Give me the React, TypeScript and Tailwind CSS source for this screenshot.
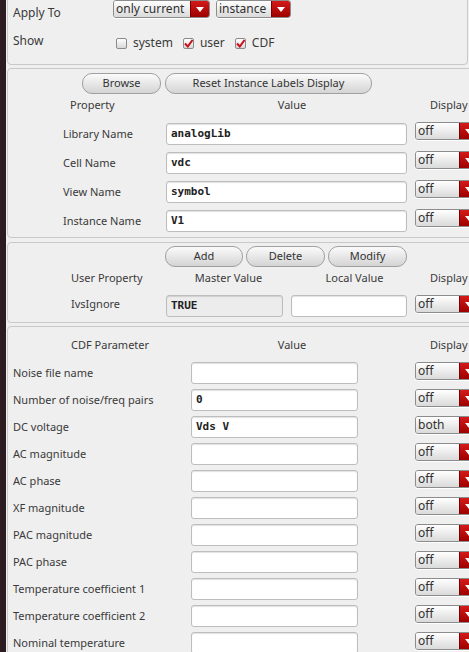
import clsx from 'clsx';
import type { ReactNode } from 'react';

// Small white down-arrow used on the red combo buttons.
function Caret() {
  return (
    <svg width="8" height="5" viewBox="0 0 8 5">
      <path d="M0 0h8L4 5z" fill="#fff" />
    </svg>
  );
}

function Combo({ value, className }: { value: string; className: string }) {
  return (
    <div
      className={clsx(
        'flex h-[18px] shrink-0 overflow-hidden rounded-[3px] border border-[#8c8c8c] shadow-[0_1px_0_rgba(255,255,255,0.9)]',
        className,
      )}
    >
      <div className="flex-1 bg-linear-to-b from-white to-[#dadada] pl-[2px] text-[12px] leading-[16px] text-[#303030]">
        {value}
      </div>
      <div className="flex w-[19px] items-center justify-center border-l border-[#7a0000] bg-linear-to-b from-[#d41a1a] to-[#9e0000]">
        <Caret />
      </div>
    </div>
  );
}

function Btn({ children, className }: { children: ReactNode; className: string }) {
  return (
    <div
      className={clsx(
        'flex h-[21px] shrink-0 items-center justify-center rounded-[10px] border border-[#a0a0a0] bg-linear-to-b from-[#fbfbfb] to-[#d4d4d4] text-[11px] text-[#333]',
        className,
      )}
    >
      {children}
    </div>
  );
}

function Field({ value, className, disabled }: { value?: string; className: string; disabled?: boolean }) {
  return (
    <div
      className={clsx(
        "flex h-[22px] shrink-0 items-center rounded-[3px] border border-[#bdbdbd] pl-[4px] pt-[1px] font-['DejaVu_Sans_Mono',monospace] text-[11px] font-bold text-[#222] shadow-[inset_0_1px_1px_rgba(0,0,0,0.12)]",
        disabled ? 'bg-[#ececec]' : 'bg-white',
        className,
      )}
    >
      {value}
    </div>
  );
}

function Check({ on, label }: { on: boolean; label: string }) {
  return (
    <div className="flex items-center gap-[6px]">
      <div className="flex h-[11px] w-[11px] items-center justify-center rounded-[2px] border border-[#8a8a8a] bg-linear-to-b from-white to-[#d8d8d8]">
        {on && (
          <svg width="9" height="9" viewBox="0 0 9 9">
            <path d="M1 4.5L3.8 7.5L8.5 1" fill="none" stroke="#c8101c" strokeWidth="2" />
          </svg>
        )}
      </div>
      <span className="text-[12px] leading-[14px]">{label}</span>
    </div>
  );
}

const props = [
  ['Library Name', 'analogLib'],
  ['Cell Name', 'vdc'],
  ['View Name', 'symbol'],
  ['Instance Name', 'V1'],
];

const cdf: [string, string, string][] = [
  ['Noise file name', '', 'off'],
  ['Number of noise/freq pairs', '0', 'off'],
  ['DC voltage', 'Vds V', 'both'],
  ['AC magnitude', '', 'off'],
  ['AC phase', '', 'off'],
  ['XF magnitude', '', 'off'],
  ['PAC magnitude', '', 'off'],
  ['PAC phase', '', 'off'],
  ['Temperature coefficient 1', '', 'off'],
  ['Temperature coefficient 2', '', 'off'],
  ['Nominal temperature', '', 'off'],
];

export default function App() {
  return (
    <div className="flex h-[652px] w-[469px] overflow-hidden bg-[#efefef] font-['Noto_Sans',sans-serif] text-[11px] text-[#3a3a3a]">
      <div className="w-[6px] shrink-0 bg-[#2d1b22]" />

      <div className="flex w-[540px] shrink-0 flex-col pl-[1px]">
        {/* Apply To / Show */}
        <div className="mt-[-6px] h-[71px] w-[461px] shrink-0 rounded-[4px] border border-[#c9c9c9] pl-[5px] pt-[5px]">
          <div className="flex h-[18px] items-start">
            <span className="mt-[6px] w-[100px] text-[12px] leading-[14px]">Apply To</span>
            <Combo value="only current" className="w-[97px]" />
            <Combo value="instance" className="ml-[6px] w-[75px]" />
          </div>
          <div className="mt-[18px] flex h-[14px] items-center">
            <span className="mt-[-4px] w-[100px] text-[12px] leading-[14px]">Show</span>
            <div className="ml-[3px] flex items-center gap-[10px]">
              <Check on={false} label="system" />
              <Check on label="user" />
              <Check on label="CDF" />
            </div>
          </div>
        </div>

        {/* Instance properties */}
        <div className="mt-[3px] shrink-0 rounded-[4px] border border-[#c9c9c9] pb-[1px]">
          <div className="mt-[4px] flex gap-[4px] pl-[74px]">
            <Btn className="w-[79px]">Browse</Btn>
            <Btn className="w-[207px]">Reset Instance Labels Display</Btn>
          </div>
          <div className="mt-[3px] flex h-[16px] items-center pl-[62px]">
            <span className="w-[96px]">Property</span>
            <span className="w-[252px] text-center">Value</span>
            <span className="pl-[12px]">Display</span>
          </div>
          <div className="mt-[7px] flex flex-col">
            {props.map(([name, value]) => (
              <div key={name} className="flex h-[29px] items-start pl-[55px] pt-[2px]">
                <span className="mt-[5px] w-[103px] leading-[14px]">{name}</span>
                <Field value={value} className="mt-[1px] w-[241px]" />
                <Combo value="off" className="ml-[8px] w-[64px]" />
              </div>
            ))}
          </div>
        </div>

        {/* User properties */}
        <div className="mt-[4px] shrink-0 rounded-[4px] border border-[#c9c9c9]">
          <div className="mt-[3px] flex gap-[3px] pl-[157px]">
            <Btn className="w-[78px]">Add</Btn>
            <Btn className="w-[79px]">Delete</Btn>
            <Btn className="w-[79px]">Modify</Btn>
          </div>
          <div className="mt-[3px] flex h-[16px] items-center pl-[63px]">
            <span className="w-[95px]">User Property</span>
            <span className="w-[125px] text-center">Master Value</span>
            <span className="w-[127px] text-center">Local Value</span>
            <span className="pl-[12px]">Display</span>
          </div>
          <div className="mt-[7px] flex h-[29px] items-start pl-[63px] pt-[2px]">
            <span className="mt-[2px] w-[95px] leading-[14px]">IvsIgnore</span>
            <Field value="TRUE" disabled className="w-[117px]" />
            <Field className="ml-[8px] w-[116px]" />
            <Combo value="off" className="ml-[8px] w-[64px]" />
          </div>
        </div>

        {/* CDF parameters */}
        <div className="mt-[3px] flex-1 rounded-[4px] border border-[#c9c9c9]">
          <div className="mt-[10px] flex h-[16px] items-center pl-[63px]">
            <span className="w-[95px]">CDF Parameter</span>
            <span className="w-[252px] text-center">Value</span>
            <span className="pl-[12px]">Display</span>
          </div>
          <div className="mt-[7px] flex flex-col">
            {cdf.map(([name, value, disp]) => (
              <div key={name} className="flex h-[27px] items-start pl-[5px] pt-[2px]">
                <span className="mt-[4px] w-[178px] leading-[14px]">{name}</span>
                <Field value={value} className="w-[167px]" />
                <Combo value={disp} className="ml-[57px] w-[64px]" />
              </div>
            ))}
          </div>
        </div>
      </div>
    </div>
  );
}
